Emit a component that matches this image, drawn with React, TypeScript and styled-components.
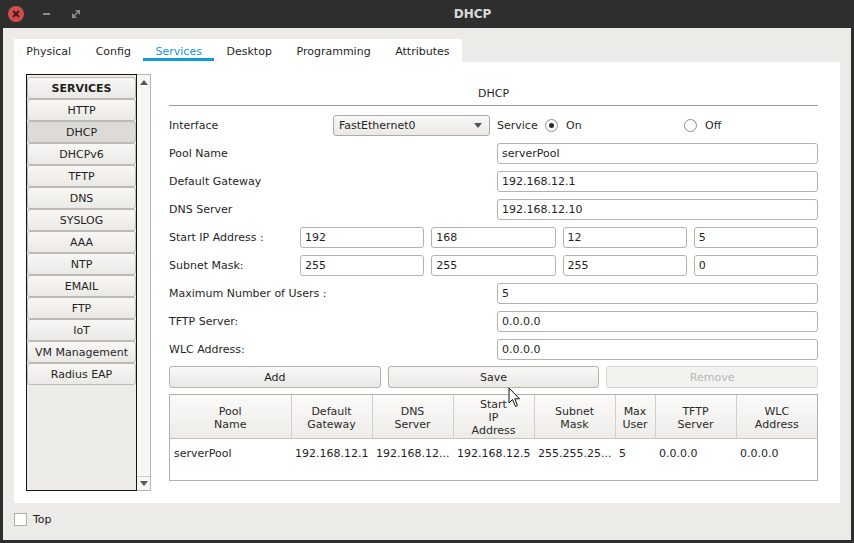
import React from "react";
import styled, { createGlobalStyle } from "styled-components";

const GlobalStyle = createGlobalStyle`
  html, body { margin: 0; padding: 0; background: #2e2e2e; }
  body {
    font-family: "DejaVu Sans", "Liberation Sans", sans-serif;
    font-size: 11px;
    color: #1f1f1f;
  }
  * { box-sizing: border-box; }
`;

const Window = styled.div`
  position: relative;
  width: 854px;
  height: 543px;
  display: flex;
  flex-direction: column;
  background: #2e2e2e;
  overflow: hidden;
`;

const TitleBar = styled.div`
  height: 28px;
  display: flex;
  align-items: center;
  padding-left: 1px;
`;

const WinSlot = styled.div`
  width: 30px;
  height: 28px;
  display: flex;
  align-items: center;
  justify-content: center;
`;

const CloseDot = styled.div`
  width: 16px;
  height: 16px;
  border-radius: 50%;
  background: #d24d4a;
  display: flex;
  align-items: center;
  justify-content: center;
`;

const MinBar = styled.div`
  width: 7px;
  height: 2px;
  background: #8c8c8c;
`;

const Title = styled.div`
  flex: 1;
  text-align: center;
  font-weight: bold;
  font-size: 12px;
  color: #d9d9d9;
`;

const Body = styled.div`
  flex: 1;
  margin: 0 3px 3px;
  padding: 11px 11px 0;
  background: #edebe7;
  display: flex;
  flex-direction: column;
`;

const TabStrip = styled.div`
  align-self: flex-start;
  display: flex;
  height: 23px;
  background: #fff;
`;

const Tab = styled.div<{ $active?: boolean }>`
  position: relative;
  padding: 1px 12.3px 0;
  line-height: 23px;
  color: ${(p) => (p.$active ? "#1796d3" : "#1f1f1f")};
  &::after {
    content: "";
    display: ${(p) => (p.$active ? "block" : "none")};
    position: absolute;
    left: 0;
    right: 0;
    bottom: 1px;
    height: 3px;
    background: #0f9ad8;
  }
`;

const Panel = styled.div`
  height: 441px;
  background: #fff;
  display: flex;
  gap: 18px;
  padding: 12px 22px 0 12px;
`;

const ListFrame = styled.div`
  display: flex;
  height: 417px;
  flex: none;
`;

const ServiceList = styled.div`
  width: 111px;
  border: 1px solid #151515;
  background: #edebe7;
  padding-top: 2px;
  display: flex;
  flex-direction: column;
`;

const ServiceButton = styled.div<{ $selected?: boolean; $header?: boolean }>`
  height: 22px;
  line-height: 22px;
  text-align: center;
  border: 1px solid #bdbab4;
  border-radius: 3px;
  font-weight: ${(p) => (p.$header ? "bold" : "normal")};
  background: ${(p) =>
    p.$selected ? "#dddbd7" : "linear-gradient(#f8f7f5, #ebe9e5)"};
  color: #1f1f1f;
  overflow: hidden;
`;

const ScrollBar = styled.div`
  width: 14px;
  border: 1px solid #b9b7b2;
  border-left: none;
  background: #f7f6f4;
  display: flex;
  flex-direction: column;
  justify-content: space-between;
`;

const ScrollArrow = styled.div<{ $down?: boolean }>`
  height: 14px;
  display: flex;
  align-items: center;
  justify-content: center;
  border-top: ${(p) => (p.$down ? "1px solid #d0cec9" : "none")};
`;

const Form = styled.div`
  width: 649px;
  min-width: 0;
  flex: none;
  display: flex;
  flex-direction: column;
`;

const Heading = styled.div`
  height: 32px;
  padding-top: 13px;
  line-height: 14px;
  text-align: center;
  border-bottom: 1px solid #9e9e9e;
  margin-bottom: 9px;
`;

const Rows = styled.div`
  display: flex;
  flex-direction: column;
  gap: 7px;
`;

const Row = styled.div`
  height: 21px;
  display: flex;
  align-items: center;
`;

const Label = styled.div<{ $w?: number }>`
  flex: ${(p) => (p.$w ? "none" : "1")};
  width: ${(p) => (p.$w ? `${p.$w}px` : "auto")};
  white-space: nowrap;
`;

const Field = styled.input<{ $w?: number }>`
  width: ${(p) => (p.$w ? `${p.$w}px` : "0")};
  flex: ${(p) => (p.$w ? "none" : "1")};
  min-width: 0;
  height: 21px;
  border: 1px solid #b5b2ac;
  border-radius: 3px;
  padding: 0 4px;
  font: inherit;
  color: #1f1f1f;
  background: #fff;
  outline: none;
`;

const IpFields = styled.div`
  flex: 1;
  min-width: 0;
  display: flex;
  gap: 7px;
`;

const Select = styled.div`
  width: 157px;
  height: 21px;
  flex: none;
  border: 1px solid #aeaba5;
  border-radius: 3px;
  background: linear-gradient(#f9f8f6, #ebe9e5);
  display: flex;
  align-items: center;
  justify-content: space-between;
  padding: 0 7px 0 5px;
`;

const ServiceGroup = styled.div`
  display: flex;
  align-items: center;
  margin-left: 7px;
`;

const RadioItem = styled.div<{ $w?: number }>`
  display: flex;
  align-items: center;
  gap: 8px;
  width: ${(p) => (p.$w ? `${p.$w}px` : "auto")};
`;

const RadioCircle = styled.div<{ $on?: boolean }>`
  width: 13px;
  height: 13px;
  border-radius: 50%;
  border: 1px solid #8f8d88;
  background: #fff;
  display: flex;
  align-items: center;
  justify-content: center;
  &::before {
    content: "";
    display: ${(p) => (p.$on ? "block" : "none")};
    width: 5px;
    height: 5px;
    border-radius: 50%;
    background: #2a2a2a;
  }
`;

const ButtonRow = styled.div`
  display: flex;
  gap: 7px;
  height: 22px;
  margin-top: -1px;
`;

const ActionButton = styled.div<{ $disabled?: boolean }>`
  flex: 1;
  padding-top: 1px;
  line-height: 20px;
  text-align: center;
  border: 1px solid ${(p) => (p.$disabled ? "#d6d4cf" : "#b4b1ab")};
  border-radius: 3px;
  background: ${(p) =>
    p.$disabled ? "#f3f2ef" : "linear-gradient(#f9f8f6, #ebe9e5)"};
  color: ${(p) => (p.$disabled ? "#b7b7b7" : "#1f1f1f")};
`;

const TableBox = styled.div`
  margin-top: 6px;
  height: 87px;
  border: 1px solid #b3b0ab;
  background: #fff;
  overflow: hidden;
`;

const Table = styled.table`
  width: 100%;
  table-layout: fixed;
  border-collapse: collapse;
`;

const HeadCell = styled.th`
  height: 43px;
  padding: 3px 2px 0;
  font-weight: normal;
  line-height: 13px;
  text-align: center;
  color: #2a2a2a;
  background: linear-gradient(#fbfaf9, #eeece8);
  border-right: 1px solid #d2cfca;
  border-bottom: 1px solid #c6c3be;
  &:last-child { border-right: none; }
`;

const Cell = styled.td`
  height: 30px;
  padding: 0 4px;
  white-space: nowrap;
  overflow: hidden;
`;

const Footer = styled.div`
  flex: 1;
  display: flex;
  align-items: flex-start;
  gap: 6px;
  padding-top: 10px;
`;

const CheckBox = styled.div`
  width: 13px;
  height: 13px;
  border: 1px solid #b0aea8;
  background: #fff;
`;

const FooterLabel = styled.div`
  line-height: 13px;
`;

const Cursor = styled.svg`
  position: absolute;
  left: 508px;
  top: 387px;
`;

const services = [
  "HTTP",
  "DHCP",
  "DHCPv6",
  "TFTP",
  "DNS",
  "SYSLOG",
  "AAA",
  "NTP",
  "EMAIL",
  "FTP",
  "IoT",
  "VM Management",
  "Radius EAP",
];

const columns = [
  { w: 121, head: ["Pool", "Name"], cell: "serverPool" },
  { w: 81, head: ["Default", "Gateway"], cell: "192.168.12.1" },
  { w: 81, head: ["DNS", "Server"], cell: "192.168.12..." },
  { w: 81, head: ["Start", "IP", "Address"], cell: "192.168.12.5" },
  { w: 81, head: ["Subnet", "Mask"], cell: "255.255.25..." },
  { w: 40, head: ["Max", "User"], cell: "5" },
  { w: 81, head: ["TFTP", "Server"], cell: "0.0.0.0" },
  { w: 0, head: ["WLC", "Address"], cell: "0.0.0.0" },
];

const tabs = ["Physical", "Config", "Services", "Desktop", "Programming", "Attributes"];

function TextRow({ label, value }: { label: string; value: string }) {
  return (
    <Row>
      <Label>{label}</Label>
      <Field $w={321} readOnly value={value} />
    </Row>
  );
}

function IpRow({ label, parts }: { label: string; parts: string[] }) {
  return (
    <Row>
      <Label $w={131}>{label}</Label>
      <IpFields>
        {parts.map((p, i) => (
          <Field key={i} readOnly value={p} />
        ))}
      </IpFields>
    </Row>
  );
}

export default function App() {
  return (
    <>
      <GlobalStyle />
      <Window>
        <TitleBar>
          <WinSlot>
            <CloseDot>
              <svg width="8" height="8" viewBox="0 0 8 8">
                <path d="M1 1L7 7M7 1L1 7" stroke="#3a1a1a" strokeWidth="1.8" />
              </svg>
            </CloseDot>
          </WinSlot>
          <WinSlot>
            <MinBar />
          </WinSlot>
          <WinSlot>
            <svg width="8" height="8" viewBox="0 0 8 8">
              <path d="M3 0H8V5Z" fill="#8c8c8c" />
              <path d="M0 3V8H5Z" fill="#8c8c8c" />
              <path d="M1.5 6.5L6.5 1.5" stroke="#8c8c8c" strokeWidth="1.4" />
            </svg>
          </WinSlot>
          <Title>DHCP</Title>
        </TitleBar>

        <Body>
          <TabStrip>
            {tabs.map((t) => (
              <Tab key={t} $active={t === "Services"}>
                {t}
              </Tab>
            ))}
          </TabStrip>

          <Panel>
            <ListFrame>
              <ServiceList>
                <ServiceButton $header>SERVICES</ServiceButton>
                {services.map((s) => (
                  <ServiceButton key={s} $selected={s === "DHCP"}>
                    {s}
                  </ServiceButton>
                ))}
              </ServiceList>
              <ScrollBar>
                <ScrollArrow>
                  <svg width="8" height="5" viewBox="0 0 8 5">
                    <path d="M0 5L4 0L8 5Z" fill="#5a5a5a" />
                  </svg>
                </ScrollArrow>
                <ScrollArrow $down>
                  <svg width="8" height="5" viewBox="0 0 8 5">
                    <path d="M0 0L8 0L4 5Z" fill="#5a5a5a" />
                  </svg>
                </ScrollArrow>
              </ScrollBar>
            </ListFrame>

            <Form>
              <Heading>DHCP</Heading>
              <Rows>
                <Row>
                  <Label $w={164}>Interface</Label>
                  <Select>
                    <span>FastEthernet0</span>
                    <svg width="8" height="5" viewBox="0 0 8 5">
                      <path d="M0 0L8 0L4 5Z" fill="#555" />
                    </svg>
                  </Select>
                  <ServiceGroup>
                    <Label $w={48}>Service</Label>
                    <RadioItem $w={139}>
                      <RadioCircle $on />
                      <span>On</span>
                    </RadioItem>
                    <RadioItem>
                      <RadioCircle />
                      <span>Off</span>
                    </RadioItem>
                  </ServiceGroup>
                </Row>
                <TextRow label="Pool Name" value="serverPool" />
                <TextRow label="Default Gateway" value="192.168.12.1" />
                <TextRow label="DNS Server" value="192.168.12.10" />
                <IpRow label="Start IP Address :" parts={["192", "168", "12", "5"]} />
                <IpRow label="Subnet Mask:" parts={["255", "255", "255", "0"]} />
                <TextRow label="Maximum Number of Users :" value="5" />
                <TextRow label="TFTP Server:" value="0.0.0.0" />
                <TextRow label="WLC Address:" value="0.0.0.0" />
                <ButtonRow>
                  <ActionButton>Add</ActionButton>
                  <ActionButton>Save</ActionButton>
                  <ActionButton $disabled>Remove</ActionButton>
                </ButtonRow>
              </Rows>

              <TableBox>
                <Table>
                  <colgroup>
                    {columns.map((c, i) => (
                      <col key={i} style={c.w ? { width: c.w } : undefined} />
                    ))}
                  </colgroup>
                  <thead>
                    <tr>
                      {columns.map((c, i) => (
                        <HeadCell key={i}>
                          {c.head.map((h, j) => (
                            <div key={j}>{h}</div>
                          ))}
                        </HeadCell>
                      ))}
                    </tr>
                  </thead>
                  <tbody>
                    <tr>
                      {columns.map((c, i) => (
                        <Cell key={i}>{c.cell}</Cell>
                      ))}
                    </tr>
                  </tbody>
                </Table>
              </TableBox>
            </Form>
          </Panel>

          <Footer>
            <CheckBox />
            <FooterLabel>Top</FooterLabel>
          </Footer>
        </Body>

        <Cursor width="13" height="21" viewBox="0 0 13 21">
          <path
            d="M1 1L1 16L4.5 12.5L7.5 19.5L9.5 18.5L6.8 11.8L11.5 11.8Z"
            fill="#fff"
            stroke="#111"
            strokeWidth="1"
            strokeLinejoin="round"
          />
        </Cursor>
      </Window>
    </>
  );
}
